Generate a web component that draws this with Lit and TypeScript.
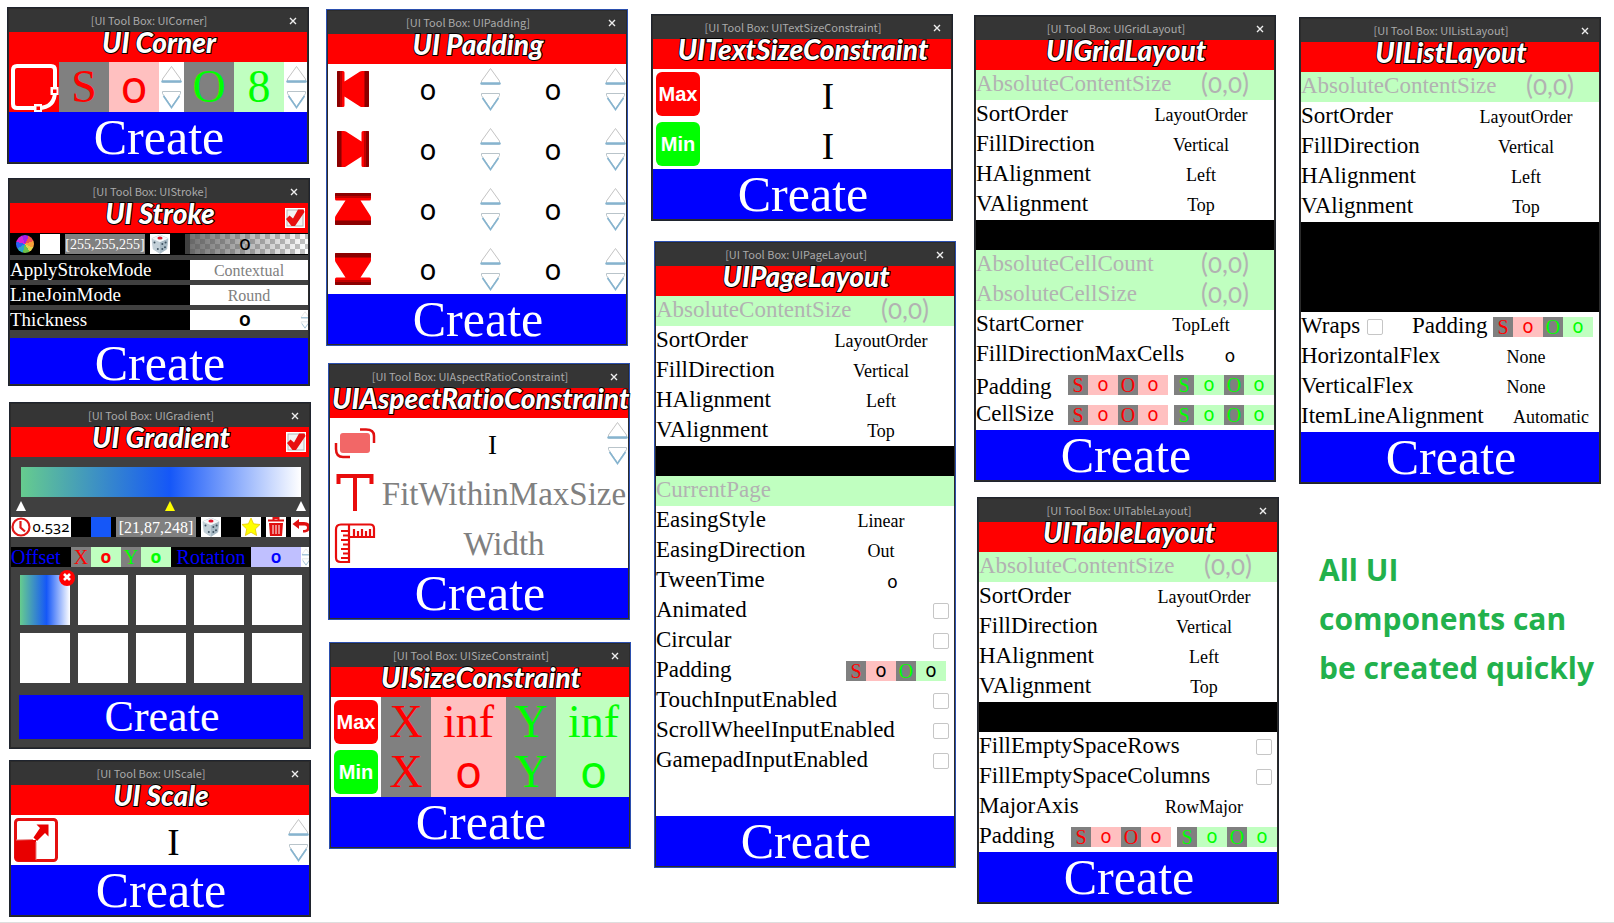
import { LitElement, html, css, svg, nothing } from "lit";
import type { TemplateResult } from "lit";
import { customElement, property } from "lit/decorators.js";
import { styleMap } from "lit/directives/style-map.js";

type Body = () => TemplateResult;

interface ToolWindow {
  name: string;
  heading: string;
  x: number;
  y: number;
  edge?: string;
  look?: string;
  toggle?: boolean;
  body: Body;
}

@customElement("tool-window")
export class ToolWindowElement extends LitElement {
  @property() name = "";
  @property() heading = "";
  @property() look = "";
  @property({ type: Boolean }) toggle = false;

  static styles = css`
    :host {
      display: block;
      box-sizing: border-box;
      border: 1px solid var(--edge, #1f242e);
      padding: 1px;
      background: #2b2b2b;
    }
    .bar {
      display: flex;
      height: 23px;
      background: #353535;
    }
    .name {
      flex: 1;
      padding-left: 10px;
      text-align: center;
      color: #aaa;
      font: 11px/22px "Noto Sans CJK SC", sans-serif;
      white-space: nowrap;
    }
    .close {
      width: 28px;
      padding: 0;
      border: 0;
      background: none;
      display: grid;
      place-items: center;
    }
    .heading {
      display: grid;
      grid-template-columns: 100%;
      height: 30px;
      background: #f00;
    }
    h2 {
      grid-area: 1 / 1;
      margin: 0;
      padding-left: 2px;
      text-align: center;
      color: #fff;
      font: italic 900 28px/21px Lato, sans-serif;
      font-variant-ligatures: none;
      white-space: nowrap;
      -webkit-text-stroke: 2px #000;
      paint-order: stroke fill;
    }
    .toggle {
      grid-area: 1 / 1;
      justify-self: end;
      display: grid;
      width: 20px;
      height: 20px;
      margin: 5px 3px 0 0;
      background: #fff;
    }
    .toggle input,
    .toggle svg {
      grid-area: 1 / 1;
      width: 20px;
      height: 20px;
      margin: 0;
    }
    .toggle input {
      opacity: 0;
    }
    .body {
      background: #fff;
      overflow: hidden;
    }
    .dark .body,
    .dark {
      background: #404040;
    }
    .create {
      display: block;
      width: 100%;
      height: 50px;
      padding: 0 0 0 2px;
      border: 0;
      background: #00f;
      color: #fff;
      font: 50px/50px "Liberation Serif", serif;
      text-align: center;
    }
    .cut .create {
      height: 46px;
      padding: 4px 0 0 2px;
      line-height: 42px;
    }
    .inset .foot {
      padding: 0 6px 8px 8px;
    }
    .inset .create {
      height: 44px;
      padding: 0 0 0 2px;
      font-size: 44px;
      line-height: 44px;
    }
  `;

  render() {
    return html`
      <section class=${this.look} aria-label=${this.heading}>
        <div class="bar">
          <span class="name">[UI Tool Box: ${this.name}]</span>
          <button class="close" aria-label="Close">
            <svg width="8" height="8" viewBox="0 0 8 8">
              <path d="M1 1 7 7M7 1 1 7" stroke="#eee" stroke-width="1.4" />
            </svg>
          </button>
        </div>
        <div class="heading">
          <h2>${this.heading}</h2>
          ${this.toggle
            ? html`<label class="toggle">
                <input type="checkbox" checked aria-label="Enabled" />
                <svg viewBox="0 0 20 20">
                  <rect x="2" y="2" width="16" height="16" fill="#f2f2f2" stroke="#b5b5b5" />
                  <path
                    d="M1 11 4.500 7.500 8 10.500 13 1.500H18.500L19.500 4 10 18H6.500Z"
                    fill="#e81010"
                  />
                </svg>
              </label>`
            : nothing}
        </div>
        <div class="body"><slot></slot></div>
        <div class="foot"><button class="create">Create</button></div>
      </section>
    `;
  }
}

const up = svg`
  <path d="M12.500 4.500 3.500 17V20H21.500V17Z" fill="#fff" stroke="#c4c4c4" stroke-linejoin="round"/>
  <path d="M3.500 19.500H21.500" stroke="#86b4cf" stroke-width="2.500" stroke-linecap="round"/>`;
const down = svg`
  <path d="M3.500 4.500H21.500V6.500L12.500 20 3.500 6.500Z" fill="#fff" stroke="#b9c4ca" stroke-linejoin="round"/>
  <path d="M4.500 9 12.500 20.500 20.500 9" fill="none" stroke="#86b4cf" stroke-width="1.600"/>`;

const spinner = (what: string, size = "") => html`
  <span class="spin ${size}">
    <button aria-label="Increase ${what}"><svg viewBox="0 0 25 25">${up}</svg></button>
    <button aria-label="Decrease ${what}"><svg viewBox="0 0 25 25">${down}</svg></button>
  </span>
`;

const field = (label: string, value: string, cls: string) =>
  html`<input class=${cls} aria-label=${label} .value=${value} />`;

const pick = (id: string, value: string, cls = "") => html`
  <select id=${id} class="pick ${cls}"><option>${value}</option></select>
`;

const choice = (win: string, label: string, value: string, cls = "") => html`
  <div class="row ${cls}">
    <label for="${win}-${label}">${label}</label>${pick(`${win}-${label}`, value)}
  </div>
`;

const readonlyRow = (label: string, value = "") => html`
  <div class="row info"><span class="label">${label}</span><output>${value}</output></div>
`;

const numberRow = (win: string, label: string, cls: string) => html`
  <div class="row ${cls}">
    <label for="${win}-${label}">${label}</label>
    <input id="${win}-${label}" class="num" .value=${"0"} />
  </div>
`;

const tickRow = (label: string) => html`
  <div class="row">
    <label class="wide"><span>${label}</span><input type="checkbox" class="tick" /></label>
  </div>
`;

const udim = (what: string, first: string, second: string, plain = "") => html`
  <span class="udim ${plain}">
    <b class=${first}>S</b>${field(`${what} scale`, "0", `${first} tint`)}
    <b class=${second}>O</b>${field(`${what} offset`, "0", `${second} tint`)}
  </span>
`;

const pairRow = (label: string, cls = "") => html`
  <div class="row pair ${cls}">
    <span class="label">${label}</span>
    ${udim(`${label} X`, "red", "red")}${udim(`${label} Y`, "green", "green")}
  </div>
`;

const common = (win: string) => html`
  ${readonlyRow("AbsoluteContentSize", "(0,0)")}
  ${choice(win, "SortOrder", "LayoutOrder")}
  ${choice(win, "FillDirection", "Vertical")}
  ${choice(win, "HAlignment", "Left")}
  ${choice(win, "VAlignment", "Top")}
`;

const dice = svg`
  <path d="M10 1 18 4.500 16.800 15 10 19.500 3.200 15 2 4.500Z" fill="#dfe8ed" stroke="#a9b9c2" stroke-width=".6"/>
  <path d="M2 4.500 10 8V19.500L3.200 15Z" fill="#c3d0d8"/>
  <path d="M18 4.500 10 8V19.500L16.800 15Z" fill="#a8bac5"/>
  <path d="M10 1 18 4.500 10 8 2 4.500Z" fill="#f3f7f9"/>
  <ellipse cx="10" cy="4" rx="2.600" ry="1.500" fill="#e0182d"/>
  <g fill="#3f5361"><circle cx="4.500" cy="8.500" r="1"/><circle cx="7.800" cy="15" r="1"/>
  <circle cx="12.300" cy="10" r="1"/><circle cx="15.600" cy="8.500" r="1"/><circle cx="12.300" cy="15" r="1"/>
  <circle cx="15" cy="13.300" r="1"/></g>`;

const diceButton = html`<button class="tool white" aria-label="Random colour">
  <svg viewBox="0 0 20 20">${dice}</svg>
</button>`;

const edgeShape = svg`
  <path d="M10 7H15Q16.500 7 16.500 8.500V17.500L32 7.500Q33 7 34 7H40Q41 7 41 8V42Q41 43 40 43H34Q33 43 32 42.500L16.500 32.500V41.500Q16.500 43 15 43H10Q9 43 9 42V8Q9 7 10 7Z" fill="#f00"/>
  <path d="M10 7H12.500V43H10Q9 43 9 42V8Q9 7 10 7ZM37 7H40Q41 7 41 8V42Q41 43 40 43H37Z" fill="#8b0000"/>
  <path d="M13 7H14V43H13ZM36 7H37V43H36Z" fill="#c00000"/>`;

const cornerBody: Body = () => html`
  <div class="strip">
    <svg class="icon" viewBox="0 0 50 50">
      <rect width="50" height="50" fill="#f00" />
      <path
        d="M46 28V8Q46 4 42 4H8Q4 4 4 8V42Q4 46 8 46H29Q46 46 46 29"
        fill="none" stroke="#fff" stroke-width="4"
      />
      <path d="M41.500 25H49.500V33H41.500ZM25 42H33V50H25Z" fill="#fff" />
      <path d="M44 27.500H47.500V31H44ZM27.500 44.500H31V48H27.500Z" fill="#f00" />
    </svg>
    <b class="cell red">S</b>${field("Corner scale", "0", "cell red tint zero")}
    ${spinner("scale")}
    <b class="cell green">O</b>${field("Corner offset", "8", "cell green tint")}
    ${spinner("offset")}
  </div>
`;

const strokeBody: Body = () => html`
  <div class="tools stroke-tools">
    <button class="wheel" aria-label="Colour wheel"></button>
    <span class="swatch white"></span>
    ${field("Stroke colour", "[255,255,255]", "rgb")} ${diceButton}
    <span class="alpha">${field("Transparency", "0", "alpha-value")}</span>
  </div>
  <div class="setting"><label for="apply">ApplyStrokeMode</label>${pick("apply", "Contextual")}</div>
  <div class="setting"><label for="join">LineJoinMode</label>${pick("join", "Round")}</div>
  <div class="setting last">
    <label for="thick">Thickness</label>
    <span class="thick"><input id="thick" .value=${"0"} />${spinner("thickness", "small")}</span>
  </div>
`;

const marker = (name: string) => html`<button class="marker ${name}" aria-label="Colour stop">
  <svg viewBox="0 0 10 10"><path d="M5 0 10 10H0Z" fill="currentColor" /></svg>
</button>`;

const gradientBody: Body = () => html`
  <div class="ramp"></div>
  <div class="markers">${marker("first")}${marker("second")}${marker("third")}</div>
  <div class="tools gradient-tools">
    <span class="time">
      <svg viewBox="0 0 20 20">
        <circle cx="10" cy="10" r="8.500" fill="#fff" stroke="#e01818" stroke-width="2.200" />
        <path d="M9.500 4V10.500L14 14.500" fill="none" stroke="#e01818" stroke-width="2.200" />
      </svg>
      ${field("Stop time", "0.532", "time-value")}
    </span>
    <span class="swatch blue"></span>
    ${field("Stop colour", "[21,87,248]", "rgb")} ${diceButton}
    <button class="tool white star" aria-label="Favourite">
      <svg viewBox="0 0 20 20">
        <path
          d="M10 1 12.600 6.800 19 7.500 14.300 12 15.600 18.500 10 15.300 4.400 18.500 5.700 12 1 7.500 7.400 6.800Z"
          fill="#ff0" stroke="#e6c800" stroke-width=".8" stroke-linejoin="round"
        />
      </svg>
    </button>
    <button class="tool white" aria-label="Delete">
      <svg viewBox="0 0 20 20">
        <path d="M7.500 2.500V1H12.500V2.500M2 3.500H18" fill="none" stroke="#e01010" stroke-width="2" />
        <path d="M3 6H17L16 19H4Z" fill="#e01010" />
        <path d="M7 8V17M10 8V17M13 8V17" stroke="#fff" />
      </svg>
    </button>
    <button class="tool white undo" aria-label="Undo">
      <svg viewBox="0 0 20 20">
        <path d="M1.500 7 8 2V5H13Q19 5 19 10T14 15.500H12V13H13.500Q16 13 16 10.500T13 8.500H8V12Z" fill="#e01010" />
      </svg>
    </button>
  </div>
  <div class="tools place">
    <span class="tag">Offset</span>
    <b class="axis red">X</b>${field("Offset X", "0", "off red")}
    <b class="axis green">Y</b>${field("Offset Y", "0", "off green")}
    <label class="tag turn" for="rotation">Rotation</label>
    <input id="rotation" .value=${"0"} />${spinner("rotation", "small")}
  </div>
  <div class="presets">
    <div class="saved">
      <button class="preset filled" aria-label="Preset 1"></button>
      <button class="remove" aria-label="Remove preset 1">
        <svg viewBox="0 0 16 16">
          <circle cx="8" cy="8" r="8" fill="#f00" />
          <path d="M5 4 11 10M11 4 5 10" stroke="#fff" stroke-width="2.600" />
        </svg>
      </button>
    </div>
    ${[2, 3, 4, 5, 6, 7, 8, 9, 10].map(
      (n) => html`<button class="preset" aria-label="Preset ${n}"></button>`,
    )}
  </div>
`;

const scaleBody: Body = () => html`
  <div class="strip">
    <svg class="icon" viewBox="0 0 50 50">
      <rect x="4.500" y="4.500" width="41" height="41" rx="3" fill="#fff" stroke="#e41010" stroke-width="3" />
      <path d="M4 25H25V46H7Q4 46 4 43Z" fill="#e80000" />
      <path d="M25.500 9.500H37.500V21.500L34 18 26 26 22.500 22.500 29 13Z" fill="#e80000" />
      <path d="M5 25 22 24.500M25 27V45" stroke="#e88080" />
    </svg>
    ${field("Scale", "I", "big one")} ${spinner("scale")}
  </div>
`;

const paddingBody: Body = () => html`
  <div class="sides">
    ${[
      { side: "Left", turn: "" },
      { side: "Right", turn: "rotate(180 25 25)" },
      { side: "Top", turn: "rotate(90 25 25)" },
      { side: "Bottom", turn: "rotate(270 25 25)" },
    ].map(
      ({ side, turn }) => html`<div class="strip">
        <svg class="icon" viewBox="0 0 50 50"><g transform=${turn || nothing}>${edgeShape}</g></svg>
        ${field(`${side} scale`, "0", "side")} ${spinner(`${side} scale`)}
        ${field(`${side} offset`, "0", "side")} ${spinner(`${side} offset`)}
      </div>`,
    )}
  </div>
`;

const aspectBody: Body = () => html`
  <div class="strip">
    <svg class="icon" viewBox="0 0 50 50">
      <rect x="10" y="15" width="30" height="20" rx="3" fill="#f26767" />
      <path
        d="M30 11.500H36Q44 11.500 44 18V25M6 25V31Q6 39 13 39H20"
        fill="none" stroke="#e11010" stroke-width="2.500"
      />
    </svg>
    ${field("Aspect ratio", "I", "mid one")} ${spinner("ratio")}
  </div>
  <div class="strip">
    <svg class="icon" viewBox="0 0 50 50">
      <path d="M8.500 16V8H41.500V16M25 8V43" fill="none" stroke="#e80c0c" stroke-width="4" />
    </svg>
    <select class="enum" aria-label="Aspect type"><option>FitWithinMaxSize</option></select>
  </div>
  <div class="strip">
    <svg class="icon" viewBox="0 0 50 50">
      <path
        d="M11 6.500H40Q44 6.500 44 10.500V19H19V44H10.500Q6 44 6 39.500V11.500Q6 6.500 11 6.500ZM19 19V7
           M19 13H11M19 17.500H13M19 22H11M19 26.500H13M19 31H11M19 35.500H13M19 40H11
           M24 19V11M28 19V13M32 19V11M36 19V13M40 19V11"
        fill="none" stroke="#e80c0c" stroke-width="2.200"
      />
    </svg>
    <select class="enum" aria-label="Dominant axis"><option>Width</option></select>
  </div>
`;

const sizeBody: Body = () => html`
  ${[
    { label: "Max", value: "inf", zero: "" },
    { label: "Min", value: "0", zero: "zero" },
  ].map(
    ({ label, value, zero }) => html`<div class="strip">
      <span class="badge ${label.toLowerCase()}">${label}</span>
      <b class="cell red">X</b>${field(`${label} X`, value, `cell broad red tint ${zero}`)}
      <b class="cell green">Y</b>${field(`${label} Y`, value, `cell broad green tint ${zero}`)}
    </div>`,
  )}
`;

const textSizeBody: Body = () => html`
  ${["Max", "Min"].map(
    (label) => html`<div class="strip">
      <span class="badge ${label.toLowerCase()}">${label}</span>
      ${field(`${label} text size`, "I", "big one full")}
    </div>`,
  )}
`;

const pageBody: Body = () => html`
  ${common("page")}
  <div class="gap"></div>
  ${readonlyRow("CurrentPage")} ${choice("page", "EasingStyle", "Linear")}
  ${choice("page", "EasingDirection", "Out")} ${numberRow("page", "TweenTime", "tween")}
  ${tickRow("Animated")} ${tickRow("Circular")}
  <div class="row end">
    <span class="label">Padding</span>${udim("Padding", "red", "green", "plain")}
  </div>
  ${tickRow("TouchInputEnabled")} ${tickRow("ScrollWheelInputEnabled")}
  ${tickRow("GamepadInputEnabled")}
  <div class="blank"></div>
`;

const gridBody: Body = () => html`
  ${common("grid")}
  <div class="gap"></div>
  ${readonlyRow("AbsoluteCellCount", "(0,0)")} ${readonlyRow("AbsoluteCellSize", "(0,0)")}
  ${choice("grid", "StartCorner", "TopLeft")} ${numberRow("grid", "FillDirectionMaxCells", "cells")}
  ${pairRow("Padding", "low")} ${pairRow("CellSize")}
`;

const tableBody: Body = () => html`
  ${common("table")}
  <div class="gap"></div>
  ${tickRow("FillEmptySpaceRows")} ${tickRow("FillEmptySpaceColumns")}
  ${choice("table", "MajorAxis", "RowMajor")} ${pairRow("Padding")}
`;

const listBody: Body = () => html`
  ${common("list")}
  <div class="gap tall"></div>
  <div class="row wraps">
    <label><span>Wraps</span><input type="checkbox" class="tick" /></label>
    <span class="label">Padding</span>${udim("Padding", "red", "green")}
  </div>
  ${choice("list", "HorizontalFlex", "None")} ${choice("list", "VerticalFlex", "None")}
  ${choice("list", "ItemLineAlignment", "Automatic", "far")}
`;

const BLUE = "#2b4fae";

const windows: ToolWindow[] = [
  { name: "UICorner", heading: "UI Corner", x: 7, y: 7, body: cornerBody },
  { name: "UIStroke", heading: "UI Stroke", x: 8, y: 178, look: "dark cut", toggle: true, body: strokeBody },
  { name: "UIGradient", heading: "UI Gradient", x: 9, y: 402, look: "dark inset", toggle: true, body: gradientBody },
  { name: "UIScale", heading: "UI Scale", x: 9, y: 760, body: scaleBody },
  { name: "UIPadding", heading: "UI Padding", x: 326, y: 9, edge: BLUE, body: paddingBody },
  { name: "UIAspectRatioConstraint", heading: "UIAspectRatioConstraint", x: 328, y: 363, edge: BLUE, body: aspectBody },
  { name: "UISizeConstraint", heading: "UISizeConstraint", x: 329, y: 642, edge: BLUE, body: sizeBody },
  { name: "UITextSizeConstraint", heading: "UITextSizeConstraint", x: 651, y: 14, body: textSizeBody },
  { name: "UIPageLayout", heading: "UIPageLayout", x: 654, y: 241, edge: BLUE, body: pageBody },
  { name: "UIGridLayout", heading: "UIGridLayout", x: 974, y: 15, body: gridBody },
  { name: "UITableLayout", heading: "UITableLayout", x: 977, y: 497, body: tableBody },
  { name: "UIListLayout", heading: "UIListLayout", x: 1299, y: 17, body: listBody },
];

@customElement("app-root")
export class AppRoot extends LitElement {
  static styles = css`
    :host {
      display: block;
      --serif: "Liberation Serif", serif;
      --zero: "Noto Sans", sans-serif;
      font-family: var(--serif);
      color: #000;
    }
    * {
      box-sizing: border-box;
    }
    input,
    select,
    button {
      margin: 0;
      padding: 0;
      border: 0;
      border-radius: 0;
      min-width: 0;
      background: none;
      color: inherit;
      font: inherit;
      text-align: center;
    }
    select {
      appearance: none;
      text-align-last: center;
    }
    b {
      font-weight: 400;
      text-align: center;
    }
    svg {
      display: block;
    }
    .desktop {
      position: relative;
      min-height: 100vh;
      background: #fff;
      border-bottom: 1px solid #dedede;
    }
    .window {
      position: absolute;
      width: 302px;
    }
    .note {
      position: absolute;
      left: 1319px;
      top: 545px;
      margin: 0;
      color: #22b14c;
      font: 700 30px/49px "Open Sans", sans-serif;
      white-space: nowrap;
    }

    .red {
      color: #f00;
    }
    .green {
      color: #0f0;
    }
    .white {
      background: #fff;
    }
    .tint.red {
      background: #ffc0c0;
    }
    .tint.green {
      background: #c0ffc0;
    }

    .strip {
      display: flex;
      height: 50px;
      overflow: hidden;
    }
    .icon {
      flex: none;
      width: 50px;
      height: 50px;
    }
    .cell {
      flex: none;
      width: 50px;
      height: 50px;
      font-size: 46px;
      line-height: 50px;
    }
    b.cell {
      background: #808080;
    }
    .cell.broad {
      width: 75px;
    }
    .cell.zero {
      padding-bottom: 4px;
      font: 46px/46px var(--zero);
      font-variant-numeric: oldstyle-nums;
    }
    .spin {
      flex: none;
      display: grid;
      grid-template-rows: 1fr 1fr;
      width: 25px;
      height: 50px;
      background: #fff;
    }
    .spin.small {
      width: 10px;
      height: 20px;
    }
    .one {
      flex: none;
      width: 225px;
      padding: 4px 0 0;
    }
    .one.big {
      font-size: 37px;
    }
    .one.mid {
      font-size: 27px;
    }
    .one.full {
      width: 250px;
    }
    .sides {
      display: grid;
      gap: 10px;
    }
    .side {
      flex: none;
      width: 100px;
      padding-bottom: 2px;
      font: 29px var(--zero);
      font-variant-numeric: oldstyle-nums;
    }
    .enum {
      flex: 1;
      padding-top: 2px;
      color: #808080;
      font-size: 33px;
    }
    .badge {
      flex: none;
      width: 44px;
      height: 44px;
      margin: 3px;
      border-radius: 6px;
      color: #fff;
      font: 700 20px/44px "Liberation Sans", sans-serif;
      text-align: center;
    }
    .badge.max {
      background: #f00;
    }
    .badge.min {
      background: #0f0;
    }

    .row {
      display: flex;
      height: 30px;
    }
    .row label,
    .label {
      flex: none;
      width: 150px;
      font-size: 23px;
      line-height: 27px;
      white-space: nowrap;
    }
    .pick {
      font-size: 18px;
    }
    .row .pick {
      width: 150px;
      height: 30px;
      padding: 0 0 0 2px;
    }
    .far label {
      width: 200px;
    }
    .far .pick {
      width: 100px;
    }
    .info {
      background: #c0ffc0;
      color: #b2b2b2;
    }
    .info .label {
      width: 200px;
    }
    .info output {
      width: 100px;
      font: 26px/26px Lato, sans-serif;
      font-variant-numeric: oldstyle-nums;
      text-align: center;
    }
    .num {
      width: 125px;
      font: 18px/30px var(--zero);
      font-variant-numeric: oldstyle-nums;
    }
    .tween label {
      width: 175px;
    }
    .cells label {
      width: 210px;
    }
    .cells .num {
      width: 90px;
    }
    .row .wide {
      flex: 1;
      display: flex;
      justify-content: space-between;
      padding-right: 5px;
    }
    .tick {
      flex: none;
      appearance: none;
      width: 16px;
      height: 16px;
      margin-top: 7px;
      border: 1px solid #c6c6c6;
      border-radius: 2px;
      background: #fff;
    }
    .end {
      justify-content: space-between;
      padding-right: 8px;
    }
    .udim {
      flex: none;
      display: grid;
      grid-template-columns: 20px 30px 20px 30px;
      grid-template-rows: 20px;
      margin-top: 5px;
      font-size: 20px;
      line-height: 20px;
    }
    .udim b {
      background: #808080;
    }
    .udim input {
      padding-bottom: 2px;
      font: 19px/18px var(--zero);
      font-variant-numeric: oldstyle-nums;
    }
    .plain input {
      color: #000;
    }
    .pair {
      gap: 6px;
    }
    .pair .label {
      width: 86px;
    }
    .low .label {
      line-height: 33px;
    }
    .row.wraps label {
      display: flex;
      gap: 7px;
      width: 111px;
    }
    .wraps .label {
      width: 81px;
    }
    .gap {
      height: 30px;
      background: #000;
    }
    .gap.tall {
      height: 90px;
    }
    .blank {
      height: 40px;
    }

    .tools {
      display: flex;
      height: 20px;
      background: #000;
      overflow: hidden;
    }
    .tools > * {
      flex: none;
    }
    .tool {
      width: 20px;
      height: 20px;
    }
    .swatch {
      width: 20px;
      height: 20px;
    }
    .swatch.blue {
      background: #1557f8;
      margin: 0 5px 0 20px;
    }
    .rgb {
      width: 80px;
      margin-right: 5px;
      padding-top: 2px;
      background: #808080;
      color: #fff;
      font-size: 16px;
    }
    .stroke-tools {
      height: 22px;
      padding: 1px 0;
      margin-bottom: 5px;
    }
    .stroke-tools .rgb {
      font-size: 14px;
    }
    .stroke-tools .swatch {
      margin-right: 5px;
    }
    .wheel {
      width: 18px;
      height: 18px;
      margin: 1px 6px;
      border-radius: 9px;
      background: conic-gradient(
        from -20deg,
        #a31fe8 0 45deg,
        #f2554f 0 90deg,
        #f9a13a 0 135deg,
        #e4d44a 0 170deg,
        #6cc24a 0 215deg,
        #2ba7c9 0 260deg,
        #2a63f6 0 305deg,
        #d522d8 0
      );
    }
    .alpha {
      width: 123px;
      margin-left: 15px;
      background:
        linear-gradient(90deg, #404040 5px, #505050cc 5px, #fff0),
        repeating-conic-gradient(#fff 0 25%, #c4c4c4 0 50%) 0 0 / 10px 10px;
    }
    .alpha-value {
      width: 120px;
      height: 20px;
      padding-bottom: 4px;
      font: 20px/16px var(--zero);
      font-variant-numeric: oldstyle-nums;
    }
    .setting {
      display: grid;
      grid-template-columns: 180px 1fr;
      height: 20px;
      margin-bottom: 5px;
      background: #000;
      color: #fff;
    }
    .setting label {
      font-size: 19px;
      line-height: 20px;
    }
    .setting .pick,
    .thick {
      background: #fff;
      color: #808080;
      font-size: 16px;
    }
    .thick {
      display: flex;
      overflow: hidden;
    }
    .thick input {
      flex: none;
      width: 110px;
      padding-bottom: 4px;
      color: #000;
      font: 600 20px/16px var(--zero);
      font-variant-numeric: oldstyle-nums;
    }
    .setting.last {
      margin-bottom: 8px;
    }

    .ramp {
      height: 30px;
      margin: 10px 8px 4px 10px;
      background: linear-gradient(90deg, #66cc8e, #1557f8 53.200%, #fff);
    }
    .markers {
      display: flex;
      justify-content: space-between;
      height: 16px;
      padding: 0 3px 0 5px;
      color: #fff;
    }
    .marker {
      width: 10px;
      height: 10px;
    }
    .marker.second {
      color: #ff0;
      margin-left: 18px;
    }
    .time {
      display: flex;
      width: 60px;
      background: #fff;
    }
    .time svg {
      width: 20px;
      height: 20px;
    }
    .time-value {
      width: 40px;
      padding-bottom: 2px;
      font: 15px/18px var(--zero);
      font-variant-numeric: oldstyle-nums;
    }
    .star {
      margin: 0 5px 0 20px;
    }
    .undo {
      margin-left: 5px;
    }
    .place {
      margin-top: 10px;
    }
    .tag {
      width: 60px;
      color: #00f;
      font-size: 20px;
      line-height: 20px;
    }
    .turn {
      width: 80px;
      text-align: center;
    }
    .axis {
      width: 20px;
      background: #808080;
      font-size: 20px;
      line-height: 20px;
    }
    .off,
    #rotation {
      width: 30px;
      padding-bottom: 2px;
      background: #c0ffc0;
      font: 700 18px/18px var(--zero);
      font-variant-numeric: oldstyle-nums;
    }
    #rotation {
      width: 50px;
      background: #c0c0ff;
      color: #00f;
      font-weight: 600;
    }
    .presets {
      display: grid;
      grid-template-columns: repeat(5, 50px);
      gap: 8px;
      padding: 8px 9px 12px;
    }
    .preset {
      width: 50px;
      height: 50px;
      background: #fff;
    }
    .filled {
      background: linear-gradient(90deg, #66cc8e, #1557f8 53.200%, #fff);
    }
    .saved {
      position: relative;
      height: 50px;
    }
    .remove {
      position: absolute;
      top: -5px;
      right: -5px;
      width: 16px;
      height: 16px;
    }
  `;

  render() {
    return html`
      <main class="desktop">
        ${windows.map(
          (w) => html`<tool-window
            class="window"
            style=${styleMap({
              left: `${w.x}px`,
              top: `${w.y}px`,
              "--edge": w.edge,
            })}
            name=${w.name}
            heading=${w.heading}
            look=${w.look ?? ""}
            ?toggle=${w.toggle}
            >${w.body()}</tool-window
          >`,
        )}
        <p class="note">All UI<br />components can<br />be created quickly</p>
      </main>
    `;
  }
}
